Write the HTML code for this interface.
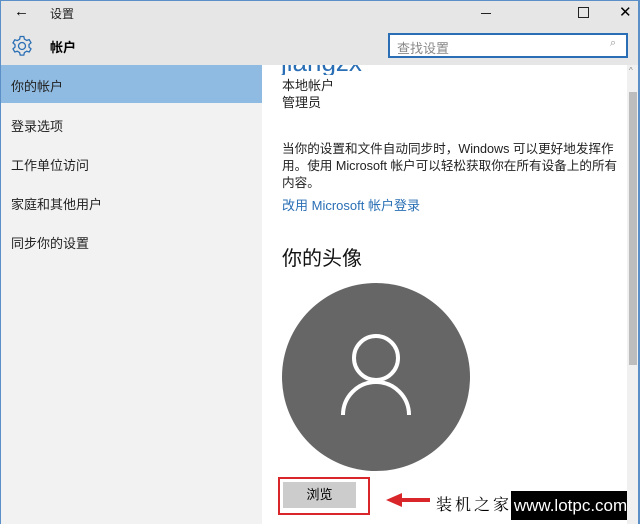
<!DOCTYPE html>
<html><head><meta charset="utf-8"><style>
*{margin:0;padding:0;box-sizing:border-box}
body{width:640px;height:524px;overflow:hidden;background:#fff;font-family:"Liberation Sans","Noto Sans CJK SC",sans-serif;position:relative;color:#000}
.abs{position:absolute}
.hdr{left:0;top:0;width:640px;height:65px;background:#e6e6e6;border-top:1px solid #5a8fc8}
.nav{left:0;top:65px;width:262px;height:459px;background:#f2f2f2}
.nav div{position:absolute;left:11px;font-size:13px;color:#222}
.sel{left:0;top:65px;width:262px;height:38px;background:#8fbbe3}
.t{font-size:13px;color:#222;line-height:17px;white-space:nowrap}
</style></head><body>
<div class="abs hdr"></div>
<div class="abs" style="left:14px;top:3px;font-size:15px">←</div>
<div class="abs" style="left:50px;top:5px;font-size:12px;color:#222">设置</div>
<div class="abs" style="left:481px;top:13px;width:10px;height:1px;background:#222"></div>
<div class="abs" style="left:578px;top:7px;width:11px;height:11px;border:1px solid #222"></div>
<div class="abs" style="left:619px;top:3px;font-size:15px">✕</div>
<svg class="abs" style="left:11px;top:35px" width="22" height="22" viewBox="0 0 22 22"><g fill="none" stroke="#2a6fb5" stroke-width="1.3"><circle cx="11" cy="11" r="3.5"/><path d="M9.2 1.5h3.6l.6 2.6 2.3 1.3 2.5-.8 1.8 3.1-2 1.8v2.6l2 1.8-1.8 3.1-2.5-.8-2.3 1.3-.6 2.6H9.2l-.6-2.6-2.3-1.3-2.5.8-1.8-3.1 2-1.8V9.7l-2-1.8 1.8-3.1 2.5.8 2.3-1.3z"/></g></svg>
<div class="abs" style="left:50px;top:37px;font-size:13px;font-weight:bold">帐户</div>
<div class="abs" style="left:388px;top:33px;width:240px;height:25px;background:#fff;border:2px solid #2a6fb5"></div>
<div class="abs" style="left:397px;top:38px;font-size:13px;color:#888">查找设置</div>
<div class="abs" style="left:610px;top:37px;font-size:11px;color:#999">⌕</div>
<div class="abs nav">
<div style="top:51px">登录选项</div>
<div style="top:90px">工作单位访问</div>
<div style="top:129px">家庭和其他用户</div>
<div style="top:168px">同步你的设置</div>
</div>
<div class="abs sel"></div>
<div class="abs" style="left:11px;top:76px;font-size:13px;color:#222">你的帐户</div>
<div class="abs" style="left:281px;top:65px;font-size:26px;color:#2a6fb5;height:10px;overflow:hidden;line-height:26px"><span style="position:relative;top:-16px">jiangzx</span></div>
<div class="abs t" style="left:282px;top:77px">本地帐户</div>
<div class="abs t" style="left:282px;top:94px">管理员</div>
<div class="abs t" style="left:282px;top:141px;font-size:12.6px">当你的设置和文件自动同步时，Windows 可以更好地发挥作<br>用。使用 Microsoft 帐户可以轻松获取你在所有设备上的所有<br>内容。</div>
<div class="abs t" style="left:282px;top:197px;color:#2a6fb5">改用 Microsoft 帐户登录</div>
<div class="abs" style="left:282px;top:242px;font-size:20px;color:#111">你的头像</div>
<svg class="abs" style="left:282px;top:282px" width="190" height="190"><circle cx="94" cy="95" r="94" fill="#666"/><g fill="none" stroke="#fff" stroke-width="4"><circle cx="94" cy="76" r="22"/><path d="M61 133a33 33 0 0 1 66 0"/></g></svg>
<div class="abs" style="left:278px;top:477px;width:92px;height:38px;border:2px solid #d9262a"></div>
<div class="abs" style="left:283px;top:482px;width:73px;height:26px;background:#ccc;font-size:13px;text-align:center;line-height:26px">浏览</div>
<svg class="abs" style="left:384px;top:492px" width="48" height="16"><path d="M14 8h32" stroke="#d9262a" stroke-width="4"/><path d="M2 8l16-7v14z" fill="#d9262a"/></svg>
<div class="abs" style="left:436px;top:492px;font-size:16px;letter-spacing:3px;font-family:'Noto Serif CJK SC',serif">装机之家</div>
<div class="abs" style="left:511px;top:491px;width:119px;height:29px;background:#000;color:#fff;font-size:17px;line-height:29px;text-align:center">www.lotpc.com</div>
<div class="abs" style="left:627px;top:65px;width:11px;height:459px;background:#f0f0f0"></div>
<div class="abs" style="left:629px;top:66px;font-size:8px;color:#888">^</div>
<div class="abs" style="left:629px;top:92px;width:8px;height:273px;background:#bdbdbd"></div>
<div class="abs" style="left:638px;top:0;width:2px;height:524px;background:#5a8fc8"></div>
<div class="abs" style="left:0;top:0;width:1px;height:524px;background:#5a8fc8"></div>
</body></html>
